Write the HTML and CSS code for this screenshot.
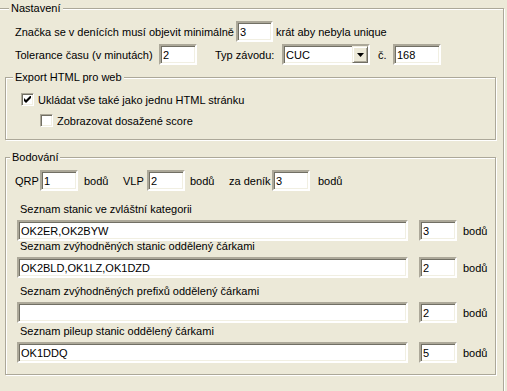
FILE: index.html
```html
<!DOCTYPE html>
<html lang="cs">
<head>
    <meta charset="UTF-8">
    <title>Nastavení</title>
    <link rel="stylesheet" href="styles.css">
</head>
<body>
    <div class="group setup">
        <span class="group-title setup-title">Nastavení</span>

        <div class="row">
            <span class="lbl w-znacka">Značka se v denících musí objevit minimálně</span>
            <input class="edit w-num" type="text" value="3">
            <span class="after">krát aby nebyla unique</span>
        </div>

        <div class="row row-2">
            <span class="lbl w-tol">Tolerance času (v minutách)</span>
            <input class="edit w-num2" type="text" value="2">
            <span class="lbl w-typ">Typ závodu:</span>
            <div class="combo">
                <span class="combo-text">CUC</span>
                <span class="combo-btn"><svg width="7" height="4" viewBox="0 0 7 4"><path d="M0 0h7L3.5 4z" fill="#000"/></svg></span>
            </div>
            <span class="lbl w-c">č.</span>
            <input class="edit w-cislo" type="text" value="168">
        </div>

        <!-- Export HTML -->
        <div class="group export">
            <span class="group-title export-title">Export HTML pro web</span>
            <label class="check-row">
                <span class="check"><svg width="7" height="7" viewBox="0 0 7 7"><path d="M0 2v3l2 2l5-5V-1L2 4z" fill="#000"/></svg></span>
                Ukládat vše také jako jednu HTML stránku
            </label>
            <label class="check-row check-sub">
                <span class="check"></span>
                Zobrazovat dosažené score
            </label>
        </div>

        <!-- Bodovani -->
        <div class="group points">
            <span class="group-title points-title">Bodování</span>

            <div class="row">
                <span class="lbl w-qrp">QRP</span>
                <input class="edit w-pts" type="text" value="1">
                <span class="unit unit-1">bodů</span>
                <span class="lbl w-vlp">VLP</span>
                <input class="edit w-pts" type="text" value="2">
                <span class="unit unit-2">bodů</span>
                <span class="lbl w-den">za deník</span>
                <input class="edit w-pts" type="text" value="3">
                <span class="unit unit-3">bodů</span>
            </div>

            <div class="list list-1">
                <div class="list-label">Seznam stanic ve zvláštní kategorii</div>
                <div class="row">
                    <input class="edit w-list" type="text" value="OK2ER,OK2BYW">
                    <input class="edit w-pts small" type="text" value="3">
                    <span class="unit">bodů</span>
                </div>
            </div>

            <div class="list list-2">
                <div class="list-label">Seznam zvýhodněných stanic oddělený čárkami</div>
                <div class="row">
                    <input class="edit w-list" type="text" value="OK2BLD,OK1LZ,OK1DZD">
                    <input class="edit w-pts small" type="text" value="2">
                    <span class="unit">bodů</span>
                </div>
            </div>

            <div class="list list-3">
                <div class="list-label">Seznam zvýhodněných prefixů oddělený čárkami</div>
                <div class="row">
                    <input class="edit w-list" type="text" value="">
                    <input class="edit w-pts small" type="text" value="2">
                    <span class="unit">bodů</span>
                </div>
            </div>

            <div class="list list-4">
                <div class="list-label">Seznam pileup stanic oddělený čárkami</div>
                <div class="row">
                    <input class="edit w-list" type="text" value="OK1DDQ">
                    <input class="edit w-pts small" type="text" value="5">
                    <span class="unit">bodů</span>
                </div>
            </div>
        </div>
    </div>
</body>
</html>
```

FILE: styles.css
```css
html, body {
    margin: 0;
    height: 391px;
    overflow: hidden;
}

body {
    background: #ECE9D8;
    font-family: "Liberation Sans", Arial, sans-serif;
    font-size: 11px;
    color: #000;
}

/* etched group box */
.group {
    position: relative;
    box-sizing: border-box;
    border: 1px solid #ACA899;
    box-shadow: inset 1px 1px 0 #fff, 1px 1px 0 #fff;
}

.group-title {
    position: absolute;
    top: -7px;
    padding: 0 2px;
    line-height: 13px;
    background: #ECE9D8;
}

.setup {
    margin: 8px 0 0 -3px;
    width: 507px;
    height: 420px;
    padding: 12px 0 0 7px;
}

.setup-title { left: 11px; }

.row {
    display: flex;
    align-items: center;
    height: 21px;
    white-space: nowrap;
}

.setup > .row { padding-left: 10px; }
.row-2 { margin-top: 2px; }

.lbl { flex: none; }
.w-znacka { width: 221px; }
.w-tol { width: 144px; }
.w-typ { width: 67px; margin-left: 18px; }
.w-c { width: 15px; margin-left: 8px; }
.after { margin-left: 3px; }

/* sunken edit box */
.edit {
    box-sizing: border-box;
    height: 21px;
    margin: 0;
    padding: 0 2px;
    border: 2px solid;
    border-color: #ACA899 #fff #fff #ACA899;
    box-shadow: inset 1px 1px 0 #716F64, inset -1px -1px 0 #F1EFE2;
    background: #fff;
    font: inherit;
    color: #000;
    outline: none;
    flex: none;
}

.w-num { width: 37px; }
.w-num2 { width: 38px; }
.w-cislo { width: 48px; }
.w-pts { width: 38px; }
.w-list { width: 391px; }

.combo {
    box-sizing: border-box;
    display: flex;
    align-items: center;
    width: 88px;
    height: 21px;
    border: 2px solid;
    border-color: #ACA899 #fff #fff #ACA899;
    box-shadow: inset 1px 1px 0 #716F64, inset -1px -1px 0 #F1EFE2;
    background: #fff;
    flex: none;
}

.combo-text {
    flex: 1;
    padding-left: 2px;
}

.combo-btn {
    box-sizing: border-box;
    display: flex;
    align-items: center;
    justify-content: center;
    width: 16px;
    height: 17px;
    background: #ECE9D8;
    border: 1px solid;
    border-color: #F1EFE2 #716F64 #716F64 #F1EFE2;
    box-shadow: inset 1px 1px 0 #fff, inset -1px -1px 0 #ACA899;
}

/* Export HTML */
.export {
    width: 491px;
    margin-top: 12px;
    padding: 15px 0 12px 15px;
}

.export-title { left: 7px; }

.check-row {
    display: flex;
    align-items: center;
    gap: 4px;
    height: 13px;
}

.check-sub {
    margin-top: 8px;
    padding-left: 19px;
}

.check {
    box-sizing: border-box;
    display: flex;
    align-items: center;
    justify-content: center;
    width: 13px;
    height: 13px;
    border: 1px solid;
    border-color: #ACA899 #fff #fff #ACA899;
    box-shadow: inset 1px 1px 0 #716F64, inset -1px -1px 0 #F1EFE2;
    background: #fff;
}

/* Bodovani */
.points {
    width: 491px;
    margin-top: 17px;
    padding: 12px 0 11px 9px;
}

.points-title { left: 4px; }

.w-qrp { width: 25px; }
.w-vlp { width: 24px; }
.w-den { width: 43px; }

.unit { flex: none; margin-left: 6px; }
.unit-1 { width: 39px; }
.unit-2 { width: 39px; margin-left: 5px; }
.unit-3 { margin-left: 8px; }

.list { padding-left: 2px; }
.list-label {
    line-height: 13px;
    margin: 0 0 4px 3px;
}

.list-1 { margin-top: 12px; }
.list-2 { margin-top: -1px; }
.list-3 { margin-top: 7px; }
.list-4 { margin-top: 2px; }

.small { margin-left: 11px; }
```
